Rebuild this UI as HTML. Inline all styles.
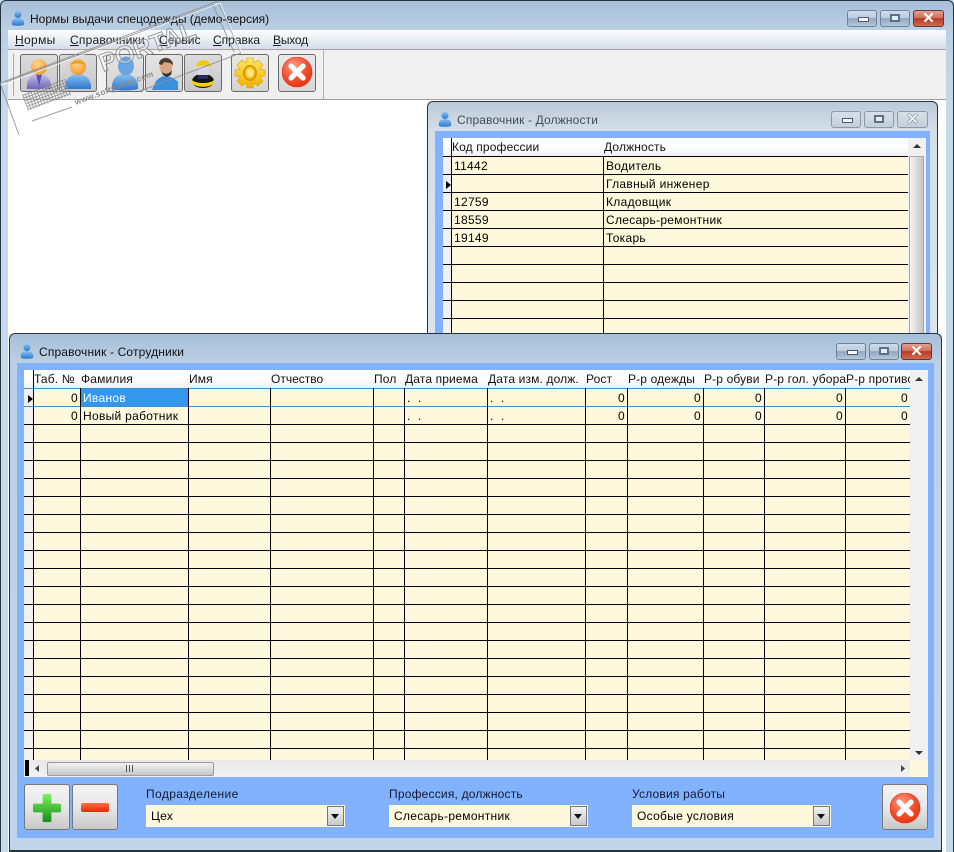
<!DOCTYPE html>
<html><head><meta charset="utf-8"><style>
html,body{margin:0;padding:0;background:#fff}
#r{position:relative;width:954px;height:852px;overflow:hidden;font:12px/14px "Liberation Sans",sans-serif;color:#000;background:#c4d9ee}
#r div,#r span,#r svg{position:absolute}
.t,.m{white-space:nowrap}
.t{letter-spacing:.3px}
.m{top:33px;color:#1c1c1c;letter-spacing:.1px}
.m u{text-decoration:underline}
.h{color:#111;letter-spacing:.14px}
.ttl{letter-spacing:0}
.ttl2{letter-spacing:.15px}
.lb{color:#141a30;letter-spacing:.2px}
.win{border:1px solid #26343c;border-bottom-width:2px;border-radius:6px 6px 0 0;box-sizing:border-box}
.wb{border:1px solid #6f8499;border-radius:3px;box-sizing:border-box;height:17px;width:30px;background:linear-gradient(#cfdcea 0,#bccde0 45%,#8fa6bf 50%,#b4c8dd 100%)}
.wb.i{background:linear-gradient(#d6e0ea,#c2cfdc);border-color:#8b98a5}
.wb.c{width:31px;background:linear-gradient(#e2a08e 0,#d0705c 45%,#b73a26 50%,#cf6a50 100%);border-color:#5d3a38}
.g1{left:10px;top:6px;width:9px;height:3px;border:1px solid #556;background:#f3f6fa}
.g2{left:9px;top:3px;width:6px;height:4px;border:2px solid #5f6f86;background:#e3edf6;box-sizing:content-box}
.g3{left:0;top:0;width:100%;height:100%;text-align:center;font:bold 15px/15px "Liberation Sans",sans-serif;color:#fff;letter-spacing:0}
.i .g3{color:#f2f5f8;text-shadow:0 0 1px #334,0 0 1px #334}
.tb{top:54px;width:38px;height:38px;border:1px solid #6a6a6a;border-radius:3px;box-sizing:border-box;background:linear-gradient(#dcdcdc,#c6c6c6)}
.bb{top:784px;width:46px;height:46px;border:1px solid #777;border-radius:3px;box-sizing:border-box;background:linear-gradient(#f3f3f3 0,#e8e8e8 50%,#c8c8c8 100%)}
.cb{top:805px;height:22px;background:#fff8dc;box-sizing:border-box;padding:4px 0 0 5px;letter-spacing:.3px}
.ar{width:17px;height:20px;top:1px;border:1px solid #777;box-sizing:border-box;background:linear-gradient(#f2f2f2,#c8c8c8)}
.ar i{position:absolute;left:3px;top:7px;border:4px solid transparent;border-top:5px solid #111;border-bottom:0}
</style></head><body><div id="r">
<svg width="0" height="0" style="left:0;top:0"><defs>
<linearGradient id="gb" x1="0" y1="0" x2="0" y2="1"><stop offset="0" stop-color="#8cc0f0"/><stop offset="1" stop-color="#2a78d0"/></linearGradient>
<linearGradient id="gv" x1="0" y1="0" x2="0" y2="1"><stop offset="0" stop-color="#c6c0ee"/><stop offset="1" stop-color="#6d66b8"/></linearGradient>
<radialGradient id="go" cx=".4" cy=".3" r=".8"><stop offset="0" stop-color="#ffd890"/><stop offset="1" stop-color="#f09020"/></radialGradient>
<radialGradient id="gr" cx=".4" cy=".3" r=".8"><stop offset="0" stop-color="#ff9a80"/><stop offset=".6" stop-color="#f04a28"/><stop offset="1" stop-color="#e83010"/></radialGradient>
<linearGradient id="gy" x1="0" y1="0" x2="0" y2="1"><stop offset="0" stop-color="#ffe860"/><stop offset="1" stop-color="#f0b000"/></linearGradient>
<linearGradient id="gg" x1="0" y1="0" x2="0" y2="1"><stop offset="0" stop-color="#80f060"/><stop offset="1" stop-color="#109018"/></linearGradient>
<linearGradient id="gm" x1="0" y1="0" x2="0" y2="1"><stop offset="0" stop-color="#ff7040"/><stop offset="1" stop-color="#e82808"/></linearGradient>
<g id="ico"><circle cx="8" cy="4.5" r="3.5" fill="url(#gb)"/><path d="M2 15C1 10 4 8 8 8s7 2 6 7c-3 1-9 1-12 0z" fill="url(#gb)"/></g>
<g id="xb"><circle cx="15" cy="15" r="15" fill="url(#gr)" stroke="#d83010" stroke-width=".6"/><path d="M9 9l12 12M21 9L9 21" stroke="#fff" stroke-width="5.2" stroke-linecap="round"/></g>
<pattern id="mesh" width="3" height="3" patternUnits="userSpaceOnUse"><path d="M0 0h3v1H0zM0 0h1v3H0z" fill="#7a7a7a"/></pattern>
</defs></svg>

<!-- main window -->
<div style="left:0;top:0;width:954px;height:852px;border:1px solid #26343c;border-bottom:0;border-radius:6px 6px 0 0;box-sizing:border-box;background:linear-gradient(#a8bfd8 0,#bcd0e5 30px,#c6daef 120px,#c6daef 100%)"></div>
<svg style="left:10px;top:10px" width="16" height="16"><use href="#ico"/></svg>
<span class="t ttl" style="left:30px;top:12px;color:#111">Нормы выдачи спецодежды (демо-версия)</span>
<div class="wb" style="left:847px;top:10px"><div class="g1"></div></div>
<div class="wb" style="left:880px;top:10px"><div class="g2"></div></div>
<div class="wb c" style="left:913px;top:10px"><div class="g3">✕</div></div>

<div style="left:8px;top:30px;width:938px;height:822px;background:#fff"></div>
<div style="left:8px;top:30px;width:938px;height:20px;background:linear-gradient(#fcfdfe,#d5dcec);border-bottom:1px solid #a3a3a3;box-sizing:border-box"></div>
<span class="m" style="left:15px;letter-spacing:.35px"><u>Н</u>ормы</span>
<span class="m" style="left:70px;letter-spacing:.2px"><u>С</u>правочники</span>
<span class="m" style="left:159px"><u>С</u>ервис</span>
<span class="m" style="left:213px;letter-spacing:0"><u>С</u>правка</span>
<span class="m" style="left:273px;letter-spacing:-.2px"><u>В</u>ыход</span>
<div style="left:8px;top:50px;width:938px;height:50px;background:#f0f0f0;border-bottom:1px solid #a0a0a0;box-sizing:border-box"></div>
<div style="left:13px;top:54px;width:1px;height:42px;background:#aaa"></div>
<div style="left:323px;top:50px;width:1px;height:49px;background:#b0b0b0"></div>

<div class="tb" style="left:20px"><svg width="36" height="36"><path d="M6 34c-1-10 5-15 12-15s13 5 12 15z" fill="url(#gv)"/><path d="M15 19l3 12 3-12z" fill="#5a50a8"/><circle cx="18" cy="12" r="8" fill="url(#go)"/></svg></div>
<div class="tb" style="left:59px"><svg width="36" height="36"><path d="M5 34c-1-10 6-15 13-15s14 5 13 15z" fill="url(#gb)"/><circle cx="18" cy="12" r="8" fill="url(#go)"/><path d="M10 10c2-6 14-6 16 0-5-2-11-2-16 0z" fill="#e8a020"/></svg></div>
<div class="tb" style="left:106px;background:linear-gradient(#e4e4e4,#d4d4d4)"><svg width="36" height="36"><path d="M5 34c-1-10 5-15 13-15s14 5 13 15c-7 2-19 2-26 0z" fill="url(#gb)"/><ellipse cx="19" cy="11" rx="8" ry="9.5" fill="#6aa6e6"/></svg></div>
<div class="tb" style="left:145px;background:linear-gradient(#e4e4e4,#d4d4d4)"><svg width="36" height="36"><path d="M6 35l4-9c3-3 6-5 9-5s10 2 13 6v8z" fill="#3a90e0"/><ellipse cx="20" cy="11" rx="6.5" ry="8.5" fill="#d9a880"/><path d="M13 9c0-8 14-8 14 1l-3-2-6-1-2 3z" fill="#4a3a30"/><path d="M15 15c2 5 8 5 11 0l-1 5-4 2-4-2z" fill="#3a2e28"/></svg></div>
<div class="tb" style="left:184px"><svg width="36" height="36"><ellipse cx="18" cy="26" rx="11" ry="7" fill="#141414"/><path d="M7 25c4 4 18 4 22 0v3c-4 5-18 5-22 0z" fill="#f7d400"/><circle cx="18" cy="16" r="6" fill="#d8d8e6"/><path d="M11 12c1-9 14-9 15 0-5-2-10-2-15 0z" fill="#f0c810"/><path d="M13 20h10v4H13z" fill="#2a2a60"/></svg></div>
<div class="tb" style="left:231px;background:linear-gradient(#e8e8e8,#d4d4d4)"><svg width="36" height="36"><g fill="url(#gy)" stroke="#e0a000" stroke-width=".6"><path d="M15 3h6l1 5 4-3 5 5-3 4 5 1v6l-5 1 3 4-5 5-4-3-1 5h-6l-1-5-4 3-5-5 3-4-5-1v-6l5-1-3-4 5-5 4 3z"/></g><ellipse cx="18" cy="18" rx="6" ry="7" fill="none" stroke="#d89800" stroke-width="2"/><ellipse cx="18" cy="18" rx="3" ry="4" fill="#ffe880"/></svg></div>
<div class="tb" style="left:278px;background:linear-gradient(#eaeaea,#d6d6d6)"><svg width="32" height="32" style="left:3px;top:2px"><use href="#xb"/></svg></div>

<!-- Должности window -->
<div class="win" style="left:427px;top:101px;width:511px;height:260px;background:linear-gradient(#bccad8 0,#d4dfe9 30px,#dce5ee 100%)"></div>
<svg style="left:437px;top:111px" width="16" height="16"><use href="#ico"/></svg>
<span class="t ttl2" style="left:457px;top:113px;color:#444c55">Справочник - Должности</span>
<div class="wb i" style="left:831px;top:111px"><div class="g1"></div></div>
<div class="wb i" style="left:864px;top:111px"><div class="g2"></div></div>
<div class="wb i" style="left:897px;top:111px;width:31px"><div class="g3">✕</div></div>
<div style="left:435px;top:131px;width:495px;height:230px;background:#82b1fd"></div>
<div style="left:443px;top:138px;width:483px;height:18px;background:linear-gradient(#fff 0,#fff 45%,#eef0f3 100%)"></div>
<div style="left:443px;top:156px;width:8px;height:200px;background:#f0f0f0"></div>
<div style="left:451px;top:156px;width:457px;height:200px;background:#fff8dc"></div>
<svg style="left:443px;top:138px" width="465" height="200" shape-rendering="crispEdges"><path d="M0 18.5H465M0 36.5H465M0 54.5H465M0 72.5H465M0 90.5H465M0 108.5H465M0 126.5H465M0 144.5H465M0 162.5H465M0 180.5H465M8.5 0V200M160.5 18V200" stroke="#000" fill="none"/></svg>
<svg style="left:445px;top:180px" width="6" height="10"><path d="M1 1l5 4-5 4z" fill="#000"/></svg>
<span class="t h" style="left:452px;top:140px">Код профессии</span>
<span class="t h" style="left:604px;top:140px">Должность</span>
<span class="t" style="left:454px;top:159px">11442</span><span class="t" style="left:606px;top:159px">Водитель</span>
<span class="t" style="left:606px;top:177px">Главный инженер</span>
<span class="t" style="left:454px;top:195px">12759</span><span class="t" style="left:606px;top:195px">Кладовщик</span>
<span class="t" style="left:454px;top:213px">18559</span><span class="t" style="left:606px;top:213px">Слесарь-ремонтник</span>
<span class="t" style="left:454px;top:231px">19149</span><span class="t" style="left:606px;top:231px">Токарь</span>
<div style="left:908px;top:138px;width:18px;height:220px;background:#f0f0f0"></div>
<svg style="left:912px;top:143px" width="10" height="6"><path d="M1 5l4-4 4 4z" fill="#333"/></svg>
<div style="left:909px;top:156px;width:15px;height:200px;border:1px solid #a8a8a8;box-sizing:border-box;background:linear-gradient(90deg,#f4f4f4,#c4c4c4)"></div>

<!-- Сотрудники window -->
<div class="win" style="left:9px;top:333px;width:933px;height:519px;background:linear-gradient(#a8bfd8 0,#bcd0e5 30px,#c0d5ea 100%)"></div>
<svg style="left:19px;top:343px" width="16" height="16"><use href="#ico"/></svg>
<span class="t ttl2" style="left:39px;top:345px;color:#111">Справочник - Сотрудники</span>
<div class="wb" style="left:836px;top:343px"><div class="g1"></div></div>
<div class="wb" style="left:869px;top:343px"><div class="g2"></div></div>
<div class="wb c" style="left:901px;top:343px"><div class="g3">✕</div></div>
<div style="left:17px;top:363px;width:917px;height:475px;background:#82b1fd"></div>
<div style="left:24px;top:370px;width:904px;height:18px;background:linear-gradient(#fff 0,#fff 45%,#eef0f3 100%)"></div>
<div style="left:24px;top:388px;width:9px;height:372px;background:#f0f0f0"></div>
<div style="left:33px;top:388px;width:877px;height:372px;background:#fff8dc"></div>
<div style="left:81px;top:389px;width:107px;height:17px;background:#3596f0"></div>
<svg style="left:24px;top:370px" width="886" height="390" shape-rendering="crispEdges"><path d="M0 18.5H886M0 36.5H886" stroke="#3b8fc8" fill="none"/><path d="M0 54.5H886M0 72.5H886M0 90.5H886M0 108.5H886M0 126.5H886M0 144.5H886M0 162.5H886M0 180.5H886M0 198.5H886M0 216.5H886M0 234.5H886M0 252.5H886M0 270.5H886M0 288.5H886M0 306.5H886M0 324.5H886M0 342.5H886M0 360.5H886M0 378.5H886M9.5 0V390M56.5 18V390M164.5 18V390M246.5 18V390M349.5 18V390M380.5 18V390M463.5 18V390M561.5 18V390M603.5 18V390M679.5 18V390M740.5 18V390M821.5 18V390" stroke="#000" fill="none"/></svg>
<svg style="left:27px;top:394px" width="6" height="10"><path d="M1 1l5 4-5 4z" fill="#000"/></svg>
<span class="t h" style="left:34px;top:372px">Таб. №</span>
<span class="t h" style="left:81px;top:372px">Фамилия</span>
<span class="t h" style="left:189px;top:372px">Имя</span>
<span class="t h" style="left:271px;top:372px;letter-spacing:0">Отчество</span>
<span class="t h" style="left:374px;top:372px">Пол</span>
<span class="t h" style="left:405px;top:372px">Дата приема</span>
<span class="t h" style="left:488px;top:372px">Дата изм. долж.</span>
<span class="t h" style="left:586px;top:372px">Рост</span>
<span class="t h" style="left:628px;top:372px">Р-р одежды</span>
<span class="t h" style="left:704px;top:372px">Р-р обуви</span>
<span class="t h" style="left:765px;top:372px">Р-р гол. убора</span>
<div style="left:846px;top:370px;width:64px;height:18px;overflow:hidden"><span class="t h" style="left:0;top:2px">Р-р противогаза</span></div>
<span class="t" style="left:71px;top:391px">0</span><span class="t" style="left:83px;top:391px;color:#fff">Иванов</span>
<span class="t" style="left:407px;top:391px">.&nbsp;&nbsp;.</span><span class="t" style="left:490px;top:391px">.&nbsp;&nbsp;.</span>
<span class="t" style="left:618px;top:391px">0</span><span class="t" style="left:694px;top:391px">0</span><span class="t" style="left:755px;top:391px">0</span><span class="t" style="left:836px;top:391px">0</span><span class="t" style="left:901px;top:391px">0</span>
<span class="t" style="left:71px;top:409px">0</span><span class="t" style="left:83px;top:409px">Новый работник</span>
<span class="t" style="left:407px;top:409px">.&nbsp;&nbsp;.</span><span class="t" style="left:490px;top:409px">.&nbsp;&nbsp;.</span>
<span class="t" style="left:618px;top:409px">0</span><span class="t" style="left:694px;top:409px">0</span><span class="t" style="left:755px;top:409px">0</span><span class="t" style="left:836px;top:409px">0</span><span class="t" style="left:901px;top:409px">0</span>
<!-- scrollbars -->
<div style="left:910px;top:370px;width:18px;height:390px;background:#f0f0f0"></div>
<svg style="left:914px;top:376px" width="10" height="6"><path d="M1 5l4-4 4 4z" fill="#333"/></svg>
<svg style="left:914px;top:750px" width="10" height="6"><path d="M1 1l4 4 4-4z" fill="#333"/></svg>
<div style="left:24px;top:760px;width:886px;height:17px;background:linear-gradient(#e8e8e8,#f2f2f2)"></div>
<div style="left:910px;top:760px;width:18px;height:17px;background:#fff8dc"></div>
<div style="left:25px;top:760px;width:4px;height:16px;background:#000"></div>
<svg style="left:34px;top:764px" width="6" height="9"><path d="M5 1L1 4.5 5 8z" fill="#444"/></svg>
<svg style="left:900px;top:764px" width="6" height="9"><path d="M1 1l4 3.5L1 8z" fill="#444"/></svg>
<div style="left:47px;top:762px;width:167px;height:14px;border:1px solid #9a9a9a;border-radius:2px;box-sizing:border-box;background:linear-gradient(#f2f2f2,#c6c6c6)"></div>
<svg style="left:126px;top:765px" width="8" height="7" shape-rendering="crispEdges"><path d="M.5 0V7M3.5 0V7M6.5 0V7" stroke="#555"/></svg>

<div class="bb" style="left:24px"><svg width="44" height="44"><path d="M17 9a2 2 0 012-2h6a2 2 0 012 2v9h9a2 2 0 012 2v6a2 2 0 01-2 2h-9v9a2 2 0 01-2 2h-6a2 2 0 01-2-2v-9H8a2 2 0 01-2-2v-6a2 2 0 012-2h9z" transform="translate(22 23) scale(.88) translate(-22 -23)" fill="url(#gg)"/></svg></div>
<div class="bb" style="left:72px"><svg width="44" height="44"><rect x="8" y="18" width="28" height="9" rx="2" fill="url(#gm)"/></svg></div>
<span class="t lb" style="left:146px;top:787px;letter-spacing:.4px">Подразделение</span>
<span class="t lb" style="left:389px;top:787px">Профессия, должность</span>
<span class="t lb" style="left:632px;top:787px">Условия работы</span>
<div class="cb" style="left:146px;width:199px">Цех<div class="ar" style="left:181px"><i></i></div></div>
<div class="cb" style="left:389px;width:199px">Слесарь-ремонтник<div class="ar" style="left:181px"><i></i></div></div>
<div class="cb" style="left:632px;width:199px">Особые условия<div class="ar" style="left:181px"><i></i></div></div>
<div class="bb" style="left:882px"><svg width="32" height="32" style="left:7px;top:8px"><use href="#xb"/></svg></div>

<!-- watermark -->
<svg style="left:0;top:0" width="250" height="140">
<g fill="none" stroke="#8f8f8f" stroke-width="1" opacity=".85">
<path d="M0 83L218 1l23 52L140 91"/>
<path d="M6 82L213 5l21 47"/>
<path d="M0 83L19 135"/>
<path d="M32 121L72 107"/>
</g>
<g fill="none" stroke="#fff" stroke-width="1" opacity=".8"><path d="M2 85L220 3l22 51"/><path d="M33 122L73 108"/></g>
<text transform="translate(103 72) rotate(-20.5)" font-family="Liberation Sans" font-weight="bold" font-size="25" fill="#fff" fill-opacity=".3" stroke="#8a8a8a" stroke-width=".8">PORTAL</text>
<text transform="translate(76 105) rotate(-20.5)" font-family="Liberation Sans" font-size="8" font-weight="bold" fill="#8c8c8c" letter-spacing=".4">www.softportal.com</text>
<g transform="translate(22 95) rotate(-20.5)" opacity=".7"><rect x="0" y="0" width="46" height="17" fill="#fff" fill-opacity=".4"/><rect x="0" y="0" width="46" height="17" fill="url(#mesh)"/></g>
</svg>
</div></body></html>
